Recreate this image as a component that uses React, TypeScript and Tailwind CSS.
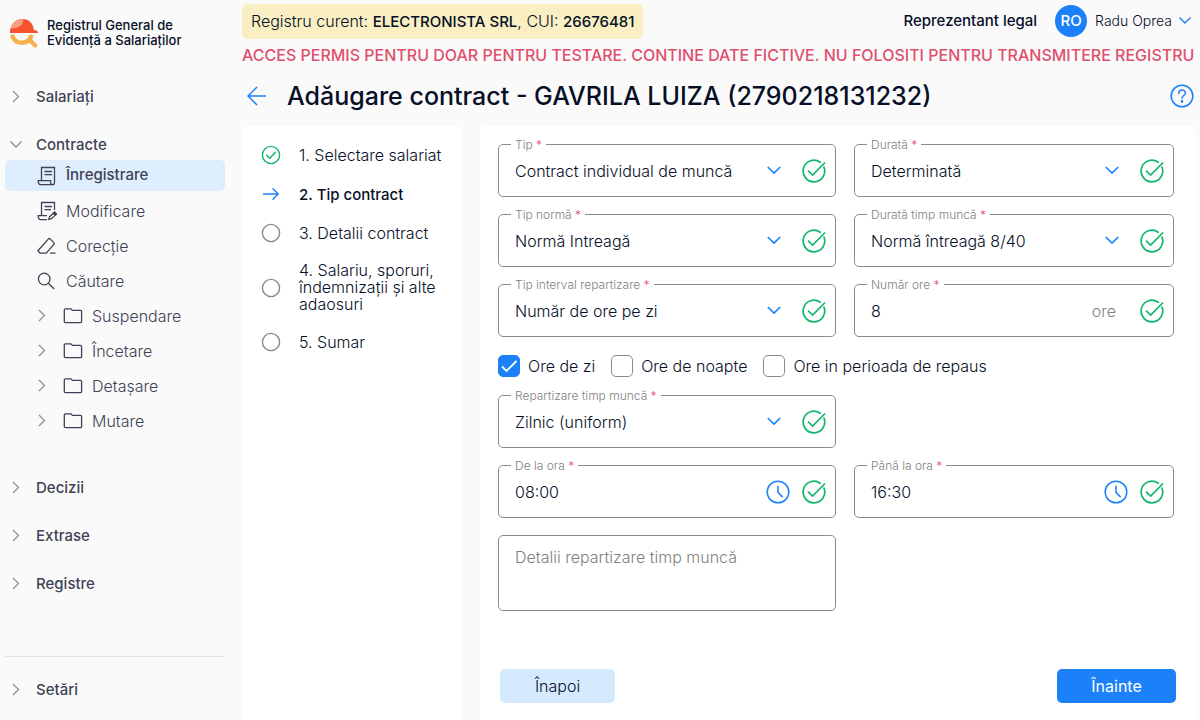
import { useState } from "react";
import type { ReactNode } from "react";

function Chevron({ className = "", down = false }: { className?: string; down?: boolean }) {
  return (
    <svg viewBox="0 0 16 16" className={`h-4 w-4 shrink-0 ${className}`} fill="none" stroke="currentColor" strokeWidth={down ? 1.4 : 1.3}>
      <path d={down ? "M2.5 4.5 L8 10 L13.5 4.5" : "M5 2 L10.5 7.5 L5 13"} />
    </svg>
  );
}

function SelectChevron() {
  return (
    <svg viewBox="0 0 16 16" className="pointer-events-none mr-5 h-4 w-4 shrink-0 text-[#1c80f8]" fill="none" stroke="currentColor" strokeWidth="1.7">
      <path d="M1.8 4 L8 10 L14.2 4" />
    </svg>
  );
}

function Logo() {
  return (
    <svg viewBox="0 0 30 32" className="h-8 w-[30px] shrink-0" fill="none">
      <path d="M1 16 C1 8 6 2 13.5 2 C20 2 24.5 6.8 24.8 13 C26.2 13.1 29 13.4 29.2 16 Z" fill="#f5532d" />
      <path d="M1.6 11.5 C3 6 7.3 2 14 2 C15 6.5 10.5 11.8 1.6 11.5 Z" fill="#f99a82" />
      <path d="M3 17.8 C4.3 23 8 25.8 12.7 25.8 C17.2 25.8 21.2 23.2 22.7 17.8" stroke="#f5b04c" strokeWidth="4.4" />
      <path d="M21 23.5 L26.2 28.6" stroke="#f5b04c" strokeWidth="4.2" strokeLinecap="round" />
    </svg>
  );
}

function DocIcon() {
  return (
    <svg viewBox="0 0 20 20" className="h-5 w-5 shrink-0" fill="none" stroke="currentColor" strokeWidth="1.3">
      <path d="M4.5 14.5 V1.5 H17.5 V16.5 C17.5 18 16.8 18.7 15.5 18.7 H3.5 C2 18.7 1.2 17.5 1.2 14.6 H13.6 V16.8 C13.6 18 14.4 18.7 15.5 18.7" />
      <path d="M7.5 5.5 H15 M7.5 8.7 H15" />
    </svg>
  );
}

function DocEditIcon() {
  return (
    <svg viewBox="0 0 20 20" className="h-5 w-5 shrink-0" fill="none" stroke="currentColor" strokeWidth="1.3">
      <path d="M17.5 9 V1.5 H4.5 V14.5 M10 14.6 H1.2 C1.2 17.5 2 18.7 3.5 18.7 H10" />
      <path d="M7.5 5.5 H15 M7.5 8.7 H14" />
      <path d="M11.8 18.4 L12.6 15.7 L16.4 12.3 L18.3 14.1 L14.5 17.7 Z" />
      <path d="M16.2 12.2 L17.6 11 L19.6 12.9 L18.3 14.2 Z" fill="currentColor" />
    </svg>
  );
}

function EraserIcon() {
  return (
    <svg viewBox="0 0 20 20" className="h-5 w-5 shrink-0" fill="none" stroke="currentColor" strokeWidth="1.3" strokeLinejoin="round">
      <path d="M9.3 17.2 H3.3 L0.9 14.7 L11.5 2.9 C12 2.4 12.6 2.4 13.1 2.9 L16.8 6.6 C17.4 7.2 17.4 7.8 16.8 8.4 Z M13 17.2 H18.5" />
    </svg>
  );
}

function SearchIcon() {
  return (
    <svg viewBox="0 0 20 20" className="h-5 w-5 shrink-0" fill="none" stroke="currentColor" strokeWidth="1.3">
      <circle cx="7.2" cy="8" r="5.8" />
      <path d="M11.4 12.2 L17.2 18" />
    </svg>
  );
}

function FolderIcon() {
  return (
    <svg viewBox="0 0 20 20" className="h-5 w-5 shrink-0" fill="none" stroke="currentColor" strokeWidth="1.3" strokeLinejoin="round">
      <path d="M1.3 3.8 C1.3 3.2 1.7 2.8 2.3 2.8 H7.8 L9.4 4.4 H17.4 C18.2 4.4 18.6 4.8 18.6 5.4 V15.6 C18.6 16.2 18.2 16.6 17.6 16.6 H2.3 C1.7 16.6 1.3 16.2 1.3 15.6 Z" />
    </svg>
  );
}

function ValidIcon() {
  return (
    <svg viewBox="0 0 24 24" className="h-6 w-6 shrink-0 text-[#12b76a]" fill="none" stroke="currentColor" strokeWidth="1.7" strokeLinecap="round">
      <path d="M18.2 3.2 A10.8 10.8 0 1 0 22 8.1" />
      <path d="M6.5 12.2 L10.6 16 L22.6 4" />
    </svg>
  );
}

function ClockIcon() {
  return (
    <svg viewBox="0 0 24 24" className="h-6 w-6 shrink-0 text-[#1c80f8]" fill="none" stroke="currentColor" strokeWidth="1.5" strokeLinecap="round">
      <circle cx="12" cy="12" r="10.8" />
      <path d="M12 6.2 V12.4 L16.2 16.6" />
    </svg>
  );
}

function Frame({ id, label, children }: { id: string; label: string; children: ReactNode }) {
  return (
    <div className="relative flex h-[53px] items-center rounded-[5px] border border-[#8b8b8b] pr-[9px] pl-4">
      <label htmlFor={id} className="absolute -top-2 left-3 bg-white px-1 text-xs leading-4 text-[#7f7f7f]">
        {label} <span className="text-[#e6456a]">*</span>
      </label>
      {children}
      <ValidIcon />
    </div>
  );
}

function SelectField({ id, label, value }: { id: string; label: string; value: string }) {
  return (
    <Frame id={id} label={label}>
      <select id={id} className="h-full min-w-0 flex-1 appearance-none bg-transparent outline-none">
        <option>{value}</option>
      </select>
      <SelectChevron />
    </Frame>
  );
}

function TextField({ id, label, value, children }: { id: string; label: string; value: string; children: ReactNode }) {
  const [text, setText] = useState(value);
  return (
    <Frame id={id} label={label}>
      <input
        id={id}
        type="text"
        value={text}
        onChange={(e) => setText(e.target.value)}
        className="h-full min-w-0 flex-1 bg-transparent outline-none"
      />
      {children}
    </Frame>
  );
}

function Check({ label, initial = false }: { label: string; initial?: boolean }) {
  const [checked, setChecked] = useState(initial);
  return (
    <label className="flex items-center gap-2">
      <span className="relative h-[22px] w-[22px]">
        <input
          type="checkbox"
          checked={checked}
          onChange={(e) => setChecked(e.target.checked)}
          className="block h-full w-full appearance-none rounded-[5px] border border-[#8b8b8b] bg-white checked:border-[#1c80f8] checked:bg-[#1c80f8]"
        />
        {checked && (
          <svg viewBox="0 0 22 22" className="pointer-events-none absolute inset-0" fill="none" stroke="white" strokeWidth="1.8">
            <path d="M4 11.5 L8.5 16 L18.5 6" />
          </svg>
        )}
      </span>
      {label}
    </label>
  );
}

function MenuGroup({ label, open = false }: { label: string; open?: boolean }) {
  return (
    <button className="flex h-[30px] w-full items-center gap-3 pl-[3px] text-left text-[15px] font-medium text-[#3f4254]">
      <Chevron down={open} className="text-[#8f8f8f]" />
      {label}
    </button>
  );
}

const links = [
  { label: "Înregistrare", icon: <DocIcon />, active: true },
  { label: "Modificare", icon: <DocEditIcon />, active: false },
  { label: "Corecție", icon: <EraserIcon />, active: false },
  { label: "Căutare", icon: <SearchIcon />, active: false },
];

const folders = ["Suspendare", "Încetare", "Detașare", "Mutare"];

const steps = [
  { label: "1. Selectare salariat", state: "done" },
  { label: "2. Tip contract", state: "current" },
  { label: "3. Detalii contract", state: "todo" },
  { label: "4. Salariu, sporuri, îndemnizații și alte adaosuri", state: "todo" },
  { label: "5. Sumar", state: "todo" },
];

function StepIcon({ state }: { state: string }) {
  return (
    <svg viewBox="0 0 20 20" className="h-5 w-5 shrink-0" fill="none" strokeLinecap="round">
      {state === "current" && <path d="M2.5 10 H17 M12 4.8 L17.2 10 L12 15.2" stroke="#1c80f8" strokeWidth="1.4" />}
      {state === "todo" && <circle cx="10" cy="10" r="8.6" stroke="#8b8b8b" strokeWidth="1.4" />}
      {state === "done" && (
        <>
          <circle cx="10" cy="10" r="8.6" stroke="#12b76a" strokeWidth="1.4" />
          <path d="M5.6 10.3 L8.8 13.3 L14.4 7.2" stroke="#12b76a" strokeWidth="1.5" />
        </>
      )}
    </svg>
  );
}

function Sidebar() {
  return (
    <aside className="flex w-[225px] shrink-0 flex-col pb-[15px] pl-[5px]">
      <div className="flex items-center gap-2 pt-[17px] pl-1">
        <Logo />
        <div className="text-[13px] leading-[15px] font-medium">
          Registrul General de
          <br />
          Evidență a Salariaților
        </div>
      </div>

      <nav className="mt-[33px] flex flex-col gap-[18px]">
        <MenuGroup label="Salariați" />
        <div>
          <MenuGroup label="Contracte" open />
          <ul className="mb-[19px] flex flex-col gap-1 text-[#3f4254]">
            {links.map((link) => (
              <li key={link.label}>
                <a
                  href="#"
                  className={`flex h-[31px] items-center gap-[9px] rounded-[5px] pl-8 ${link.active ? "bg-[#dfeeff] text-[15px] font-medium" : ""}`}
                >
                  {link.icon}
                  {link.label}
                </a>
              </li>
            ))}
            {folders.map((folder) => (
              <li key={folder}>
                <a href="#" className="flex h-[31px] items-center pl-[29px]">
                  <Chevron className="mr-[13px] text-[#8f8f8f]" />
                  <FolderIcon />
                  <span className="ml-[9px]">{folder}</span>
                </a>
              </li>
            ))}
          </ul>
        </div>
        <MenuGroup label="Decizii" />
        <MenuGroup label="Extrase" />
        <MenuGroup label="Registre" />
      </nav>

      <div className="mt-auto border-t border-[#e3e3ea] pt-[18px]">
        <MenuGroup label="Setări" />
      </div>
    </aside>
  );
}

export default function App() {
  return (
    <div className="flex min-h-screen overflow-hidden bg-[#fafafa] font-['Inter',sans-serif] text-base font-light text-[#060f27]">
      <Sidebar />

      <div className="flex min-w-0 flex-1 flex-col pt-1 pr-1 pl-[17px]">
        <header className="flex h-[34px] items-center">
          <div className="rounded-[5px] bg-[#f9efc2] px-[9px] leading-[34px]">
            Registru curent: <b className="text-[15px] font-medium">ELECTRONISTA SRL</b>, CUI:{" "}
            <b className="text-[15px] font-medium">26676481</b>
          </div>
          <div className="ml-auto text-[15px] font-medium">Reprezentant legal</div>
          <div className="ml-[18px] flex h-8 w-8 items-center justify-center rounded-full bg-[#1c80f8] text-[15px] font-medium text-white">
            RO
          </div>
          <button className="mr-[3px] ml-2 flex items-center gap-[5px] text-sm">
            Radu Oprea
            <Chevron down className="text-[#1c80f8]" />
          </button>
        </header>

        <p className="pt-[5px] leading-6 font-medium whitespace-nowrap text-[#e0506e]">
          ACCES PERMIS PENTRU DOAR PENTRU TESTARE. CONTINE DATE FICTIVE. NU FOLOSITI PENTRU TRANSMITERE REGISTRU
        </p>

        <div className="flex h-[59px] items-center pb-[2px]">
          <button aria-label="Înapoi la listă" className="mr-4 ml-[5px] text-[#1c80f8]">
            <svg viewBox="0 0 24 24" className="h-6 w-6" fill="none" stroke="currentColor" strokeWidth="1.5">
              <path d="M1 12 H19 M10 3 L1 12 L10 21" />
            </svg>
          </button>
          <h1 className="text-[25px] leading-9 font-medium whitespace-nowrap">Adăugare contract - GAVRILA LUIZA (2790218131232)</h1>
          <button aria-label="Ajutor" className="mr-[2px] ml-auto text-[#1c80f8]">
            <svg viewBox="0 0 24 24" className="h-6 w-6" fill="none" stroke="currentColor" strokeWidth="1.5" strokeLinecap="round">
              <circle cx="12" cy="12" r="10.8" />
              <path d="M8.8 9.4 C8.8 4.8 15.4 5.2 15.4 9 C15.4 11.6 12 11.4 12 14.2" />
              <circle cx="12" cy="17.4" r="0.6" fill="currentColor" />
            </svg>
          </button>
        </div>

        <div className="flex flex-1 gap-[18px]">
          <ol className="flex w-[220px] shrink-0 flex-col gap-[19px] rounded-t-[5px] bg-white pt-[19px] pr-[18px] pl-[19px]">
            {steps.map((step) => (
              <li
                key={step.label}
                className={`flex items-center gap-[18px] leading-[17px] ${step.state === "current" ? "text-[15px] font-medium" : ""}`}
              >
                <StepIcon state={step.state} />
                {step.label}
              </li>
            ))}
          </ol>

          <form
            onSubmit={(e) => e.preventDefault()}
            className="flex min-w-0 flex-1 flex-col rounded-t-[5px] bg-white px-[18px] pt-[18px] pb-[17px]"
          >
            <div className="mr-1 grid grid-cols-[minmax(0,338fr)_minmax(0,320fr)] gap-x-[18px] gap-y-[17px]">
              <SelectField id="tip" label="Tip" value="Contract individual de muncă" />
              <SelectField id="durata" label="Durată" value="Determinată" />
              <SelectField id="norma" label="Tip normă" value="Normă Intreagă" />
              <SelectField id="timp" label="Durată timp muncă" value="Normă întreagă 8/40" />
              <SelectField id="interval" label="Tip interval repartizare" value="Număr de ore pe zi" />
              <TextField id="ore" label="Număr ore" value="8">
                <span className="mr-6 text-[#7f7f7f]">ore</span>
              </TextField>

              <div className="col-span-2 flex h-6 items-center gap-4">
                <Check label="Ore de zi" initial />
                <Check label="Ore de noapte" />
                <Check label="Ore in perioada de repaus" />
              </div>

              <div className="col-span-2 grid grid-cols-subgrid">
                <SelectField id="repartizare" label="Repartizare timp muncă" value="Zilnic (uniform)" />
              </div>

              <TextField id="de-la" label="De la ora" value="08:00">
                <span className="mr-3">
                  <ClockIcon />
                </span>
              </TextField>
              <TextField id="pana-la" label="Până la ora" value="16:30">
                <span className="mr-3">
                  <ClockIcon />
                </span>
              </TextField>

              <textarea
                aria-label="Detalii repartizare timp muncă"
                placeholder="Detalii repartizare timp muncă"
                className="h-[76px] resize-none rounded-[5px] border border-[#8b8b8b] px-4 py-[9px] outline-none placeholder:text-[#7f7f7f]"
              />
            </div>

            <div className="mt-auto flex justify-between px-[2px]">
              <button type="button" className="h-[34px] w-[115px] rounded-[5px] bg-[#d6eaff]">
                Înapoi
              </button>
              <button type="submit" className="h-[34px] w-[119px] rounded-[5px] bg-[#1c80f8] font-normal text-white">
                Înainte
              </button>
            </div>
          </form>
        </div>
      </div>
    </div>
  );
}
